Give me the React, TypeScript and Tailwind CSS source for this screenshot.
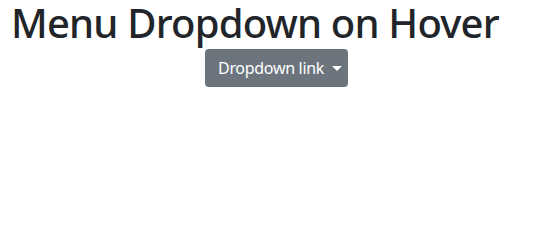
import React from "react";

export default function App() {
  return (
    <div className="w-[535px] h-[217px] bg-white">
      <h1 className="pl-[11px] pt-[0px] text-[40px] leading-[46px] font-medium text-[#212529] font-['Noto_Sans','Open_Sans',sans-serif] tracking-[-0.8px]">
        Menu Dropdown on Hover
      </h1>
      <div className="pl-[205px] mt-[3px]">
        <button className="flex items-center h-[38px] w-[143px] pl-[13px] rounded-[4px] bg-[#6c757d] text-white text-[16px] font-['Noto_Sans','Open_Sans',sans-serif] tracking-[-0.3px]">
          Dropdown link
          <span className="ml-[8px] mt-[1px] w-0 h-0 border-t-[5px] border-t-white border-x-[5px] border-x-transparent" />
        </button>
      </div>
    </div>
  );
}
